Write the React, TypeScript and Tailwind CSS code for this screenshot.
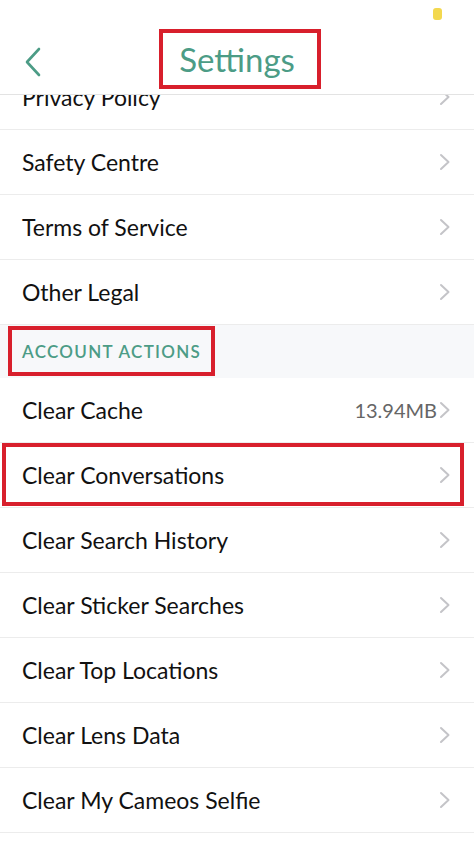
const green = 'text-[#4c9c86]'

const Chevron = () => (
  <svg width="12" height="18" viewBox="0 0 12 18" fill="none" className="shrink-0">
    <path d="M2 2l7.5 7L2 16" stroke="#c4c4c8" strokeWidth="2" strokeLinecap="round" strokeLinejoin="round" />
  </svg>
)

const Row = ({ label, value, first }: { label: string; value?: string; first?: boolean }) => (
  <div
    className={`relative flex h-[65px] items-center justify-between border-b border-[#ececec] pl-[22px] pr-[23px] ${first ? '-mt-[30px]' : ''}`}
  >
    <span className="text-[23px] text-[#111]">{label}</span>
    <div className="flex items-center gap-[2px]">
      {value && <span className="text-[20px] text-[#666]">{value}</span>}
      <Chevron />
    </div>
  </div>
)

const App = () => {
  return (
    <div className="relative h-[841px] w-[474px] overflow-hidden bg-white" style={{ fontFamily: 'Lato, "Open Sans", sans-serif' }}>
      <header className="relative z-10 flex h-[95px] items-end justify-center border-b border-[#e3e3e3] bg-white pb-[18px]">
        <svg width="18" height="30" viewBox="0 0 18 30" fill="none" className="absolute left-[24px] top-[47px]">
          <path d="M15 2L3 15l12 13" stroke="#4c9c86" strokeWidth="2.6" strokeLinecap="round" strokeLinejoin="round" />
        </svg>
        <h1 className={`text-[33px] ${green} leading-none`}>Settings</h1>
        <div className="absolute left-[433px] top-[8px] h-[12px] w-[9px] rounded-[3px] bg-[#f3d84e]" />
      </header>

      <div className="overflow-hidden">
        <Row label="Privacy Policy" first />
        <Row label="Safety Centre" />
        <Row label="Terms of Service" />
        <Row label="Other Legal" />
        <div className="flex h-[53px] items-center bg-[#f7f8fa] pl-[22px]">
          <span className={`text-[17px] font-semibold tracking-[1.3px] ${green}`}>ACCOUNT ACTIONS</span>
        </div>
        <Row label="Clear Cache" value="13.94MB" />
        <Row label="Clear Conversations" />
        <Row label="Clear Search History" />
        <Row label="Clear Sticker Searches" />
        <Row label="Clear Top Locations" />
        <Row label="Clear Lens Data" />
        <Row label="Clear My Cameos Selfie" />
      </div>

      <div className="absolute left-[159px] top-[29px] z-20 h-[60px] w-[162px] border-[4px] border-[#d81f2c]" />
      <div className="absolute left-[8px] top-[326px] z-20 h-[50px] w-[207px] border-[4px] border-[#d81f2c]" />
      <div className="absolute left-[2px] top-[443px] z-20 h-[63px] w-[462px] border-[4px] border-[#d81f2c]" />
    </div>
  )
}

export default App
